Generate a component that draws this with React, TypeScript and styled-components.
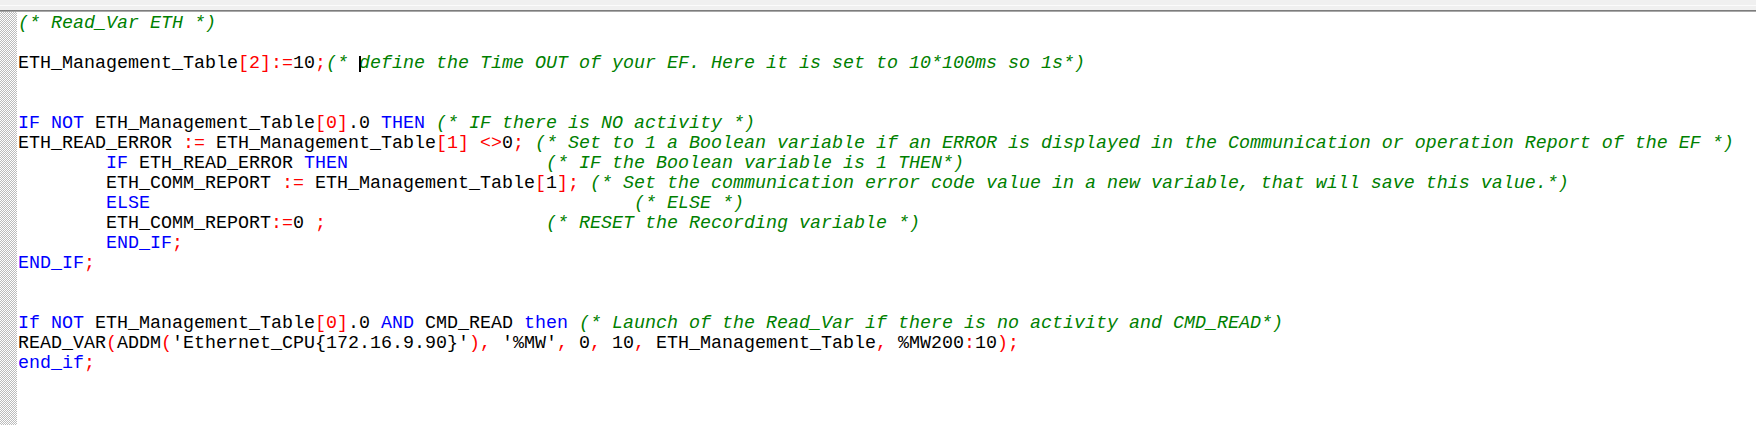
import React from "react";
import styled, { createGlobalStyle } from "styled-components";

type Kind = "id" | "kw" | "op" | "cm";
type Tok = [Kind, string] | ["caret"];

const GlobalStyle = createGlobalStyle`
  html, body {
    margin: 0;
    padding: 0;
    background: #ffffff;
  }
  #root {
    height: 100vh;
  }
`;

const Window = styled.div`
  display: flex;
  flex-direction: column;
  width: 100%;
  height: 100vh;
  overflow: hidden;
  background: #ffffff;
`;

const TopStrip = styled.div`
  flex: none;
  height: 12px;
  background: linear-gradient(
    to bottom,
    #f0f0f0 0 5px,
    #fbfbfb 5px 6px,
    #f0f0f0 6px 10px,
    #7c7c7c 10px 11px,
    #a9a9a9 11px 12px
  );
`;

const Body = styled.div`
  flex: 1;
  display: flex;
  flex-direction: row;
  min-height: 0;
`;

const Gutter = styled.div`
  flex: none;
  width: 17px;
  background-color: #ffffff;
  background-image: conic-gradient(
    #bcbcbc 25%,
    #ffffff 0 50%,
    #bcbcbc 0 75%,
    #ffffff 0
  );
  background-size: 2px 2px;
`;

const Code = styled.div`
  flex: 1;
  padding-top: 2px;
  padding-left: 1px;
  font-family: "Liberation Mono", "Courier New", monospace;
  font-size: 18.333px;
  line-height: 20px;
  white-space: pre;
  color: #000000;
`;

const Line = styled.div`
  height: 20px;
`;

const colors: Record<Kind, string> = {
  id: "#000000",
  kw: "#0000ff",
  op: "#ff0000",
  cm: "#008000",
};

const Token = styled.span<{ $kind: Kind }>`
  color: ${(p) => colors[p.$kind]};
  font-style: ${(p) => (p.$kind === "cm" ? "italic" : "normal")};
`;

const Caret = styled.span`
  position: relative;
  display: inline-block;
  width: 0;
  height: 20px;
  vertical-align: top;

  &::after {
    content: "";
    position: absolute;
    left: 0;
    top: 2px;
    width: 2px;
    height: 16px;
    background: #000000;
  }
`;

const pad = (n: number) => " ".repeat(n);
const IND = pad(8);

const lines: Tok[][] = [
  [["cm", "(* Read_Var ETH *)"]],
  [],
  [
    ["id", "ETH_Management_Table"],
    ["op", "[2]:="],
    ["id", "10"],
    ["op", ";"],
    ["cm", "(* "],
    ["caret"],
    ["cm", "define the Time OUT of your EF. Here it is set to 10*100ms so 1s*)"],
  ],
  [],
  [],
  [
    ["kw", "IF NOT"],
    ["id", " ETH_Management_Table"],
    ["op", "[0]"],
    ["id", ".0 "],
    ["kw", "THEN"],
    ["id", " "],
    ["cm", "(* IF there is NO activity *)"],
  ],
  [
    ["id", "ETH_READ_ERROR "],
    ["op", ":="],
    ["id", " ETH_Management_Table"],
    ["op", "[1]"],
    ["id", " "],
    ["op", "<>"],
    ["id", "0"],
    ["op", ";"],
    ["id", " "],
    [
      "cm",
      "(* Set to 1 a Boolean variable if an ERROR is displayed in the Communication or operation Report of the EF *)",
    ],
  ],
  [
    ["id", IND],
    ["kw", "IF"],
    ["id", " ETH_READ_ERROR "],
    ["kw", "THEN"],
    ["id", pad(18)],
    ["cm", "(* IF the Boolean variable is 1 THEN*)"],
  ],
  [
    ["id", IND + "ETH_COMM_REPORT "],
    ["op", ":="],
    ["id", " ETH_Management_Table"],
    ["op", "["],
    ["id", "1"],
    ["op", "];"],
    ["id", " "],
    [
      "cm",
      "(* Set the communication error code value in a new variable, that will save this value.*)",
    ],
  ],
  [
    ["id", IND],
    ["kw", "ELSE"],
    ["id", pad(44)],
    ["cm", "(* ELSE *)"],
  ],
  [
    ["id", IND + "ETH_COMM_REPORT"],
    ["op", ":="],
    ["id", "0 "],
    ["op", ";"],
    ["id", pad(20)],
    ["cm", "(* RESET the Recording variable *)"],
  ],
  [
    ["id", IND],
    ["kw", "END_IF"],
    ["op", ";"],
  ],
  [
    ["kw", "END_IF"],
    ["op", ";"],
  ],
  [],
  [],
  [
    ["kw", "If NOT"],
    ["id", " ETH_Management_Table"],
    ["op", "[0]"],
    ["id", ".0 "],
    ["kw", "AND"],
    ["id", " CMD_READ "],
    ["kw", "then"],
    ["id", " "],
    ["cm", "(* Launch of the Read_Var if there is no activity and CMD_READ*)"],
  ],
  [
    ["id", "READ_VAR"],
    ["op", "("],
    ["id", "ADDM"],
    ["op", "("],
    ["id", "'Ethernet_CPU{172.16.9.90}'"],
    ["op", "),"],
    ["id", " '%MW'"],
    ["op", ","],
    ["id", " 0"],
    ["op", ","],
    ["id", " 10"],
    ["op", ","],
    ["id", " ETH_Management_Table"],
    ["op", ","],
    ["id", " %MW200"],
    ["op", ":"],
    ["id", "10"],
    ["op", ");"],
  ],
  [
    ["kw", "end_if"],
    ["op", ";"],
  ],
];

export default function App() {
  return (
    <>
      <GlobalStyle />
      <Window>
        <TopStrip />
        <Body>
          <Gutter />
          <Code>
            {lines.map((toks, i) => (
              <Line key={i}>
                {toks.map((t, j) =>
                  t[0] === "caret" ? (
                    <Caret key={j} />
                  ) : (
                    <Token key={j} $kind={t[0]}>
                      {t[1]}
                    </Token>
                  )
                )}
              </Line>
            ))}
          </Code>
        </Body>
      </Window>
    </>
  );
}
